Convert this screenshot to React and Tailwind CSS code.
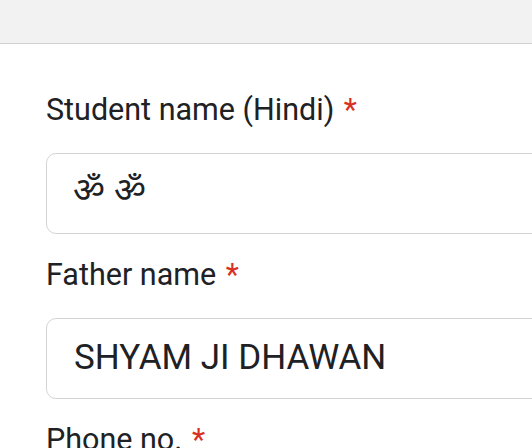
export default function App() {
  const fields = [
    { label: "Student name (Hindi)", value: "ॐ ॐ", hindi: true },
    { label: "Father name", value: "SHYAM JI DHAWAN" },
    { label: "Phone no.", value: "" },
  ];

  return (
    <div className="w-[532px] h-[448px] overflow-hidden bg-white font-['Roboto',sans-serif] text-[#202124]">
      <div className="h-[44px] bg-[#f2f2f2] border-b border-[#cfcfcf]" />
      <div className="pl-[46px] pt-[49px] flex flex-col">
        {fields.map((f) => (
          <div key={f.label} className="flex flex-col">
            <div className="text-[30.5px] leading-[34px] whitespace-nowrap">
              {f.label} <span className="text-[#d93025] ml-[2px]">*</span>
            </div>
            <div className="mt-[26px] mb-[24px] w-[560px] h-[81px] border border-[#d4d4d4] rounded-[10px] flex items-center pl-[26px]">
              {f.hindi ? (
                <span className="text-[35px] leading-[40px] font-['Noto_Sans','Noto_Sans_Devanagari',sans-serif] -mt-[10px]">
                  {f.value}
                </span>
              ) : (
                <span className="text-[35px] pl-[1px]">{f.value}</span>
              )}
            </div>
          </div>
        ))}
      </div>
    </div>
  );
}
